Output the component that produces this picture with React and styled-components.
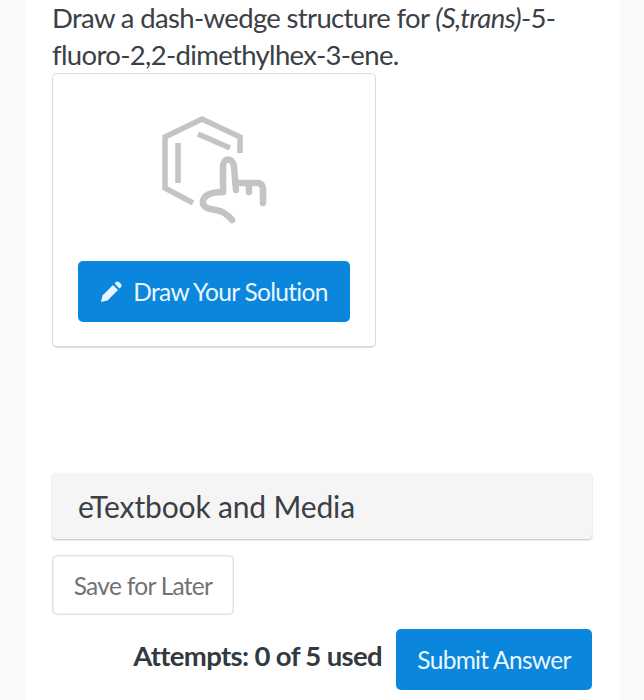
import styled, { createGlobalStyle } from "styled-components";

const GlobalStyle = createGlobalStyle`
  html, body {
    margin: 0;
    padding: 0;
    background: #fafafa;
    font-family: Lato, "Open Sans", sans-serif;
  }
`;

const Page = styled.div`
  width: 594px;
  height: 700px;
  margin-left: 26px;
  box-sizing: border-box;
  padding: 0 28px 0 26px;
  background: #fff;
  overflow: hidden;
`;

const Question = styled.p`
  margin: -1px 0 0;
  font-size: 27.5px;
  line-height: 37px;
  letter-spacing: -0.65px;
  color: #3a4045;
`;

const QuestionLine = styled.span`
  display: block;
`;

const Card = styled.div`
  width: 324px;
  height: 275px;
  box-sizing: border-box;
  padding: 31px 25px 0;
  border: 1px solid #dcdcdc;
  border-bottom-width: 2px;
  border-radius: 5px;
  display: flex;
  flex-direction: column;
  align-items: center;
`;

const Button = styled.button`
  border: 0;
  border-radius: 5px;
  font-family: inherit;
  font-size: 24.5px;
  letter-spacing: -0.7px;
  color: ${(p) => (p.$primary ? "#eaf6ff" : "#6f7376")};
  background: ${(p) => (p.$primary ? "#0a86dd" : "#fff")};
  box-shadow: ${(p) => (p.$primary ? "none" : "inset 0 0 0 1.5px #e2e2e2")};
  padding: 0;
`;

const DrawButton = styled(Button)`
  width: 272px;
  height: 61px;
  margin-top: 31px;
  flex-shrink: 0;
  display: flex;
  align-items: center;
  justify-content: center;
  gap: 11px;
`;

const MediaBar = styled.div`
  height: 66px;
  margin-top: 125px;
  box-sizing: border-box;
  padding-left: 26px;
  display: flex;
  align-items: center;
  font-size: 30px;
  letter-spacing: -0.15px;
  color: #3a4045;
  background: #f5f5f5;
  border-radius: 4px;
  box-shadow: 0 1px 2px rgba(0, 0, 0, 0.25);
`;

const SaveButton = styled(Button)`
  display: block;
  width: 182px;
  height: 60px;
  margin-top: 16px;
`;

const Footer = styled.div`
  margin-top: 14px;
  display: flex;
  justify-content: flex-end;
  align-items: center;
  gap: 14px;
`;

const Attempts = styled.span`
  font-size: 27.5px;
  font-weight: 700;
  letter-spacing: -0.65px;
  color: #32393f;
  transform: translateY(-4px);
`;

const SubmitButton = styled(Button)`
  width: 196px;
  height: 61px;
`;

const IconSvg = styled.svg`
  flex-shrink: 0;
`;

const DrawIcon = () => (
  <IconSvg width="130" height="125" viewBox="0 0 130 125" fill="none" stroke="#c4c4c4" strokeWidth="5.5">
    <path d="M44 98 16 83V32L53 14 91 32V48" />
    <path d="M49 29 81 43M29 38V78" />
    <g strokeLinecap="round" strokeWidth="6.500">
      <path d="M74 87V62C74 52 84 52 85 62L87 85" />
      <path d="M74 87C63 87 55 90 54 96 53 102 59 104 67 105 73 106 79 110 83 115" />
      <path d="M87 78H109C113 78 114 82 114 85V98" />
      <path d="M100 79V87" />
    </g>
  </IconSvg>
);

const PencilIcon = () => (
  <svg width="22" height="22" viewBox="0 0 22 22" fill="#eaf6ff">
    <path d="M1 21 2.500 14.500 13 4 18 9 7.500 19.500Z" />
    <path d="M14.500 2.500 16 1C17 .2 18 .2 19 1L21 3C21.800 4 21.800 5 21 6L19.500 7.500Z" />
  </svg>
);

const App = () => (
  <Page>
    <GlobalStyle />
    <Question>
      <QuestionLine>
        Draw a dash-wedge structure for <em>(S,trans)</em>-5-
      </QuestionLine>
      <QuestionLine>fluoro-2,2-dimethylhex-3-ene.</QuestionLine>
    </Question>
    <Card>
      <DrawIcon />
      <DrawButton $primary>
        <PencilIcon />
        Draw Your Solution
      </DrawButton>
    </Card>
    <MediaBar>eTextbook and Media</MediaBar>
    <SaveButton>Save for Later</SaveButton>
    <Footer>
      <Attempts>Attempts: 0 of 5 used</Attempts>
      <SubmitButton $primary>Submit Answer</SubmitButton>
    </Footer>
  </Page>
);

export default App;
